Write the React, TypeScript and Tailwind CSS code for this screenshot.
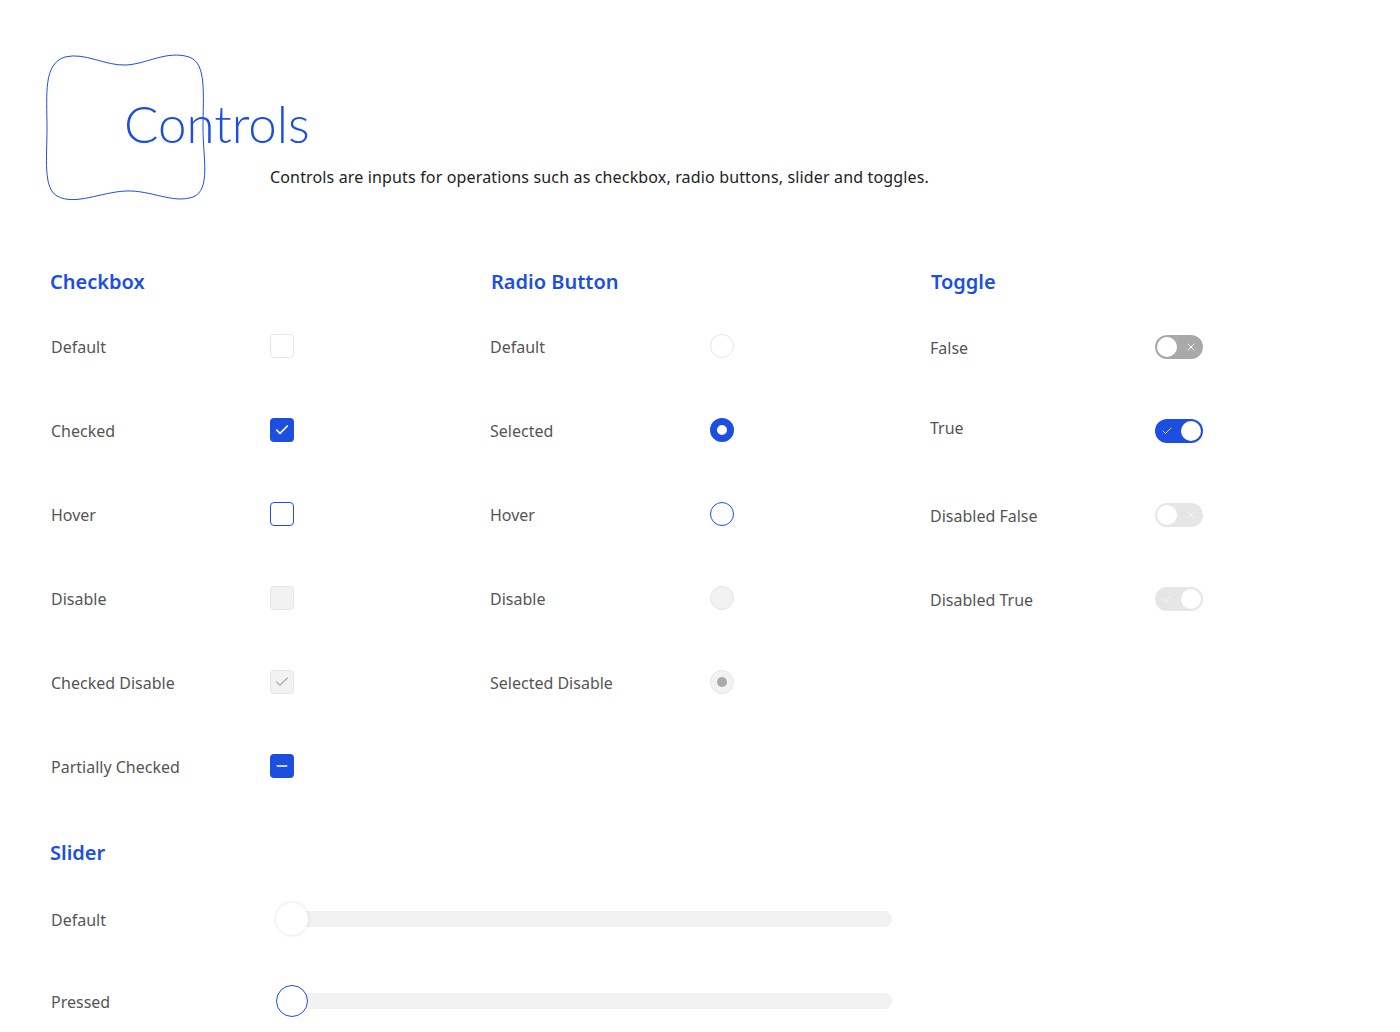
import { Check, Minus, X } from 'lucide-react';

const font = { fontFamily: '"Noto Sans", "Open Sans", sans-serif' };

function Checkbox({ state }: { state: string }) {
  if (state === 'checked')
    return (
      <div className="w-6 h-6 rounded bg-[#1c4fe0] flex items-center justify-center">
        <Check size={16} strokeWidth={2.5} className="text-white" />
      </div>
    );
  if (state === 'hover') return <div className="w-6 h-6 rounded border border-[#1c4fe0] bg-white" />;
  if (state === 'disable') return <div className="w-6 h-6 rounded border border-[#e6e6e6] bg-[#f2f2f2]" />;
  if (state === 'checkedDisable')
    return (
      <div className="w-6 h-6 rounded border border-[#e6e6e6] bg-[#f2f2f2] flex items-center justify-center">
        <Check size={16} strokeWidth={2} className="text-[#b0b0b0]" />
      </div>
    );
  if (state === 'partial')
    return (
      <div className="w-6 h-6 rounded bg-[#1c4fe0] flex items-center justify-center">
        <Minus size={16} strokeWidth={2.5} className="text-white" />
      </div>
    );
  return <div className="w-6 h-6 rounded border border-[#e6e6e6] bg-white" />;
}

function Radio({ state }: { state: string }) {
  if (state === 'selected') return <div className="w-6 h-6 rounded-full border-[7px] border-[#1c4fe0] bg-white" />;
  if (state === 'hover') return <div className="w-6 h-6 rounded-full border border-[#1c4fe0] bg-white" />;
  if (state === 'disable') return <div className="w-6 h-6 rounded-full border border-[#e6e6e6] bg-[#f2f2f2]" />;
  if (state === 'selectedDisable')
    return (
      <div className="w-6 h-6 rounded-full border border-[#e6e6e6] bg-[#f2f2f2] flex items-center justify-center">
        <div className="w-2.5 h-2.5 rounded-full bg-[#a9a9a9]" />
      </div>
    );
  return <div className="w-6 h-6 rounded-full border border-[#e6e6e6] bg-white" />;
}

function Toggle({ on, disabled }: { on: boolean; disabled?: boolean }) {
  const bg = disabled ? 'bg-[#e6e6e6]' : on ? 'bg-[#1c4fe0]' : 'bg-[#a9a9a9]';
  return (
    <div className={`w-12 h-6 rounded-full ${bg} p-0.5 flex items-center ${on ? 'justify-between' : 'justify-between flex-row-reverse'}`}>
      {on ? (
        <Check size={12} strokeWidth={2} className={`ml-1 ${disabled ? 'text-[#f5f5f5]' : 'text-white/80'}`} />
      ) : (
        <X size={12} strokeWidth={2} className={`mr-1 ${disabled ? 'text-[#f5f5f5]' : 'text-white'}`} />
      )}
      <div className="w-5 h-5 rounded-full bg-white" />
    </div>
  );
}

function Row({
  label,
  children,
  w = 'w-[220px]',
  h = 'h-[84px]',
  lift,
}: {
  label: string;
  children: React.ReactNode;
  w?: string;
  h?: string;
  lift?: boolean;
}) {
  return (
    <div className={`${h} flex items-center`}>
      <div className={`${w} text-[16px] text-[#555] ${lift ? 'pb-1.5' : 'pt-0.5'}`}>{label}</div>
      {children}
    </div>
  );
}

function Heading({ children }: { children: React.ReactNode }) {
  return <h2 className="text-[20px] font-semibold text-[#1c4fe0] h-[30px] leading-[30px]">{children}</h2>;
}

function Slider({ pressed }: { pressed?: boolean }) {
  return (
    <div className="relative w-[616px] h-8 flex items-center">
      <div className="w-full h-4 rounded-full bg-[#f2f2f2]" />
      <div
        className={`absolute left-0 top-0 w-8 h-8 rounded-full bg-white ${
          pressed ? 'border-[1.5px] border-[#1c4fe0]' : 'shadow-[0_0_4px_rgba(0,0,0,0.12)]'
        }`}
      />
    </div>
  );
}

export default function App() {
  return (
    <div className="min-h-screen bg-white pl-[50px] pt-[54px]" style={font}>
      <div className="relative h-[176px]">
        <svg className="absolute left-[-5px] top-0" width="164" height="148" viewBox="0 0 164 148" fill="none">
          <path
            d="M20 3 C40 -2 60 12 81 11 C102 10 122 -4 144 3 C162 9 158 40 158 74 C158 104 166 136 148 143 C128 150 106 136 81 137 C56 138 30 152 12 142 C-2 134 2 104 2 74 C2 40 -2 10 20 3 Z"
            stroke="#1c4fe0"
            strokeWidth="1"
          />
        </svg>
        <h1
          className="absolute left-[74px] top-[44px] text-[51px] font-light leading-none text-[#1c4fe0]"
          style={{ fontFamily: 'Lato, sans-serif' }}
        >
          Controls
        </h1>
        <p className="absolute left-[220px] top-[111px] text-[16px] text-[#222] tracking-[0.15px]">
          Controls are inputs for operations such as checkbox, radio buttons, slider and toggles.
        </p>
      </div>

      <div className="flex mt-[37px]">
        <div className="w-[440px]">
          <Heading>Checkbox</Heading>
          <div className="mt-[7px] pl-px">
            <Row label="Default" w="w-[219px]"><Checkbox state="default" /></Row>
            <Row label="Checked" w="w-[219px]"><Checkbox state="checked" /></Row>
            <Row label="Hover" w="w-[219px]"><Checkbox state="hover" /></Row>
            <Row label="Disable" w="w-[219px]"><Checkbox state="disable" /></Row>
            <Row label="Checked Disable" w="w-[219px]"><Checkbox state="checkedDisable" /></Row>
            <Row label="Partially Checked" w="w-[219px]"><Checkbox state="partial" /></Row>
          </div>
        </div>
        <div className="w-[440px]">
          <div className="pl-px">
            <Heading>Radio Button</Heading>
          </div>
          <div className="mt-[7px]">
            <Row label="Default"><Radio state="default" /></Row>
            <Row label="Selected"><Radio state="selected" /></Row>
            <Row label="Hover"><Radio state="hover" /></Row>
            <Row label="Disable"><Radio state="disable" /></Row>
            <Row label="Selected Disable"><Radio state="selectedDisable" /></Row>
          </div>
        </div>
        <div className="w-[440px]">
          <div className="pl-px">
            <Heading>Toggle</Heading>
          </div>
          <div className="mt-[8px]">
            <Row label="False" w="w-[225px]"><Toggle on={false} /></Row>
            <Row label="True" w="w-[225px]" lift><Toggle on /></Row>
            <Row label="Disabled False" w="w-[225px]"><Toggle on={false} disabled /></Row>
            <Row label="Disabled True" w="w-[225px]"><Toggle on disabled /></Row>
          </div>
        </div>
      </div>

      <div className="mt-[30px]">
        <Heading>Slider</Heading>
        <div className="mt-[10px] pl-px">
          <Row label="Default" w="w-[225px]" h="h-[82px]"><Slider /></Row>
          <Row label="Pressed" w="w-[225px]" h="h-[82px]"><Slider pressed /></Row>
        </div>
      </div>
    </div>
  );
}
